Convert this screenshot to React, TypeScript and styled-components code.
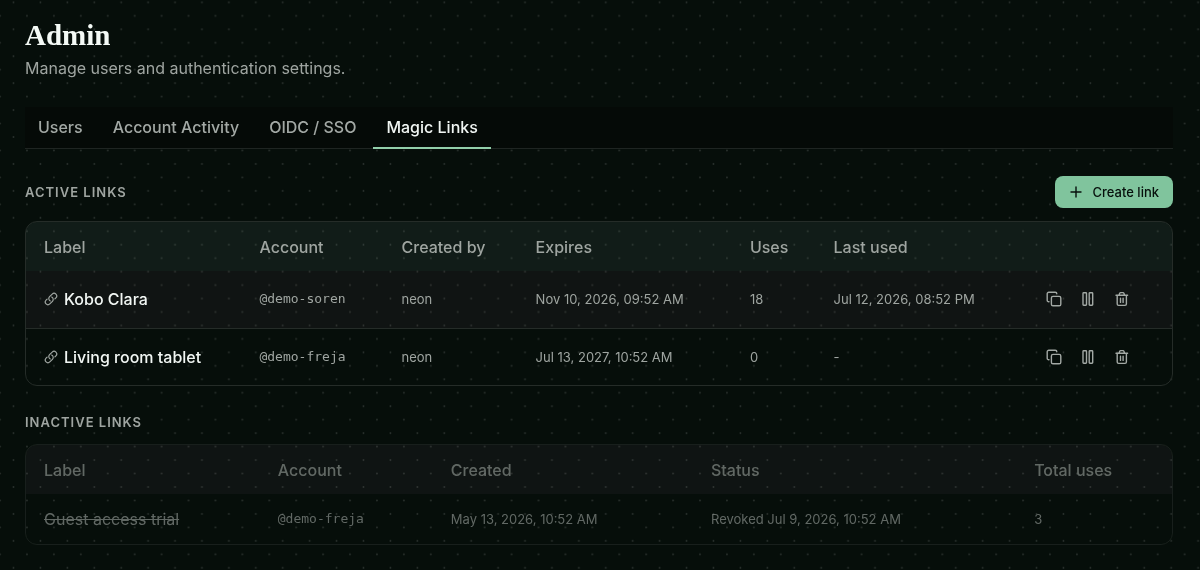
import React from "react";
import styled, { createGlobalStyle, css } from "styled-components";

const sans = `Inter, "Liberation Sans", sans-serif`;
const mono = `"DejaVu Sans Mono", "Liberation Mono", monospace`;

const GlobalStyle = createGlobalStyle`
  *, *::before, *::after { box-sizing: border-box; }
  body {
    margin: 0;
    background: #060e0a;
    color: #9fa5a1;
    font-family: ${sans};
    font-size: 16px;
    line-height: 20px;
  }
`;

const Backdrop = styled.svg`
  position: fixed;
  inset: 0;
  z-index: -1;
  width: 100%;
  height: 100%;
`;

const Page = styled.main`
  padding: 19px 27px 24px 25px;
`;

const Title = styled.h1`
  margin: 0;
  color: #f4faf6;
  font: 700 29px/32px "Liberation Serif", serif;
`;

const Subtitle = styled.p`
  margin: 6px 0 0;
  font-size: 16px;
  line-height: 22px;
`;

const Tabs = styled.nav`
  display: flex;
  gap: 4px;
  margin-top: 28px;
  background: #050a07;
  border-bottom: 1px solid #1f2522;
`;

const Tab = styled.button<{ $active?: boolean }>`
  height: 42px;
  margin-bottom: -1px;
  padding: 0 13px;
  background: none;
  border: 0;
  border-bottom: 2px solid ${(p) => (p.$active ? "#92cfaa" : "transparent")};
  color: ${(p) => (p.$active ? "#f1f6f3" : "#a3a9a5")};
  font: 500 16px/20px ${sans};
  cursor: pointer;
`;

const SectionHead = styled.div`
  display: flex;
  align-items: center;
  justify-content: space-between;
  margin: 27px 0 13px;
`;

const SectionTitle = styled.h2`
  margin: 0;
  font-size: 13px;
  line-height: 18px;
  font-weight: 600;
  letter-spacing: 1px;
  text-transform: uppercase;
`;

const CreateButton = styled.button`
  display: flex;
  align-items: center;
  gap: 10px;
  height: 32px;
  padding: 0 14px;
  background: #80c49d;
  border: 0;
  border-radius: 8px;
  color: #07100c;
  font: 500 13px/20px ${sans};
  cursor: pointer;
`;

const Panel = styled.div<{ $muted?: boolean }>`
  overflow: hidden;
  border: 1px solid #252c28;
  border-radius: 12px;
  opacity: ${(p) => (p.$muted ? 0.6 : 1)};
`;

const Table = styled.table`
  width: 100%;
  border-collapse: collapse;
  table-layout: fixed;
`;

const HeadRow = styled.tr<{ $tinted?: boolean }>`
  height: 49px;
  background: ${(p) => (p.$tinted ? "rgba(130, 180, 170, 0.09)" : "rgba(140, 110, 130, 0.13)")};
`;

const HeadCell = styled.th<{ $width?: string }>`
  width: ${(p) => p.$width ?? "auto"};
  padding: 0 0 0 18px;
  font-size: 16px;
  font-weight: 500;
  text-align: left;
`;

const Row = styled.tr<{ $hovered?: boolean; $short?: boolean }>`
  height: ${(p) => (p.$short ? 50 : 57)}px;
  background: ${(p) => (p.$hovered ? "rgba(140, 100, 130, 0.08)" : "transparent")};
  & + & {
    border-top: 1px solid #252c28;
  }
`;

const cellText = css`
  padding: 0 0 0 18px;
  white-space: nowrap;
`;

const Cell = styled.td<{ $mono?: boolean }>`
  ${cellText}
  font-family: ${(p) => (p.$mono ? mono : sans)};
  font-size: 13px;
`;

const LabelCell = styled.td<{ $revoked?: boolean }>`
  ${cellText}
  color: ${(p) => (p.$revoked ? "inherit" : "#f1f6f3")};
  font-size: 16px;
  font-weight: ${(p) => (p.$revoked ? 400 : 500)};
  text-decoration: ${(p) => (p.$revoked ? "line-through" : "none")};
`;

const LabelGroup = styled.span`
  display: flex;
  align-items: center;
  gap: 6px;
`;

const Actions = styled.div`
  display: flex;
  gap: 4px;
`;

const IconButton = styled.button`
  display: grid;
  place-items: center;
  width: 30px;
  height: 30px;
  padding: 0;
  background: none;
  border: 0;
  color: #a3a9a5;
  cursor: pointer;
`;

const Glyph = styled.svg<{ $size: number }>`
  flex: none;
  width: ${(p) => p.$size}px;
  height: ${(p) => p.$size}px;
  fill: none;
  stroke: currentColor;
  stroke-width: 1.4;
  stroke-linecap: round;
  stroke-linejoin: round;
`;

const LinkGlyph = styled(Glyph)`
  color: #a3a9a5;
  stroke-width: 2;
`;

const activeLinks = [
  { label: "Kobo Clara", account: "@demo-soren", by: "neon", expires: "Nov 10, 2026, 09:52 AM", uses: 18, last: "Jul 12, 2026, 08:52 PM" },
  { label: "Living room tablet", account: "@demo-freja", by: "neon", expires: "Jul 13, 2027, 10:52 AM", uses: 0, last: "-" },
];

const tabs = ["Users", "Account Activity", "OIDC / SSO", "Magic Links"];

function LinkIcon() {
  return (
    <LinkGlyph $size={14} viewBox="0 0 24 24" aria-hidden="true">
      <path d="M13.19 8.688a4.5 4.5 0 0 1 1.242 7.244l-4.5 4.5a4.5 4.5 0 0 1-6.364-6.364l1.757-1.757m13.35-.622 1.757-1.757a4.5 4.5 0 0 0-6.364-6.364l-4.5 4.5a4.5 4.5 0 0 0 1.242 7.244" />
    </LinkGlyph>
  );
}

function CopyIcon() {
  return (
    <Glyph $size={16} viewBox="0 0 16 16" aria-hidden="true">
      <rect x="5.4" y="5.4" width="9.4" height="9.4" rx="1.6" />
      <path d="M3 10.8h-.2A1.6 1.6 0 0 1 1.2 9.2V2.8A1.6 1.6 0 0 1 2.8 1.2h6.4A1.6 1.6 0 0 1 10.8 2.8" />
    </Glyph>
  );
}

function PauseIcon() {
  return (
    <Glyph $size={16} viewBox="0 0 16 16" aria-hidden="true">
      <rect x="3" y="1.8" width="3.5" height="12.4" rx="0.7" />
      <rect x="9.2" y="1.8" width="3.5" height="12.4" rx="0.7" />
    </Glyph>
  );
}

function TrashIcon() {
  return (
    <Glyph $size={16} viewBox="0 0 16 16" aria-hidden="true">
      <path d="M2 4.2h11.6M3.2 4.200v8.800A1.4 1.4 0 0 0 4.6 14.400h6.400A1.4 1.4 0 0 0 12.400 13V4.200M5 4.200l.7-2A1 1 0 0 1 6.600 1.600h2.400a1 1 0 0 1 .9.6l.7 2M6.500 7.200v4.200M9.100 7.200v4.200" />
    </Glyph>
  );
}

export default function App() {
  return (
    <>
      <GlobalStyle />
      <Backdrop aria-hidden="true">
        <defs>
          <pattern id="dots" width="28" height="28" patternUnits="userSpaceOnUse" patternTransform="translate(-0.9 1.4) scale(0.9615)">
            <circle cx="15" cy="1" r="0.95" fill="#2b322e" />
            <circle cx="1" cy="15" r="0.95" fill="#2b322e" />
          </pattern>
        </defs>
        <rect width="100%" height="100%" fill="url(#dots)" />
      </Backdrop>
      <Page>
        <header>
          <Title>Admin</Title>
          <Subtitle>Manage users and authentication settings.</Subtitle>
        </header>
        <Tabs aria-label="Admin sections">
          {tabs.map((name) => (
            <Tab key={name} type="button" $active={name === "Magic Links"}>{name}</Tab>
          ))}
        </Tabs>

        <section>
          <SectionHead>
            <SectionTitle>Active links</SectionTitle>
            <CreateButton type="button">
              <Glyph $size={14} viewBox="0 0 14 14" aria-hidden="true">
                <path d="M7 2v10M2 7h10" />
              </Glyph>
              Create link
            </CreateButton>
          </SectionHead>
          <Panel>
            <Table>
              <thead>
                <HeadRow $tinted>
                  <HeadCell $width="18.8%">Label</HeadCell>
                  <HeadCell $width="12.4%">Account</HeadCell>
                  <HeadCell $width="11.7%">Created by</HeadCell>
                  <HeadCell $width="18.7%">Expires</HeadCell>
                  <HeadCell $width="7.3%">Uses</HeadCell>
                  <HeadCell $width="17.9%">Last used</HeadCell>
                  <HeadCell aria-label="Actions" />
                </HeadRow>
              </thead>
              <tbody>
                {activeLinks.map((link, i) => (
                  <Row key={link.label} $hovered={i === 0}>
                    <LabelCell><LabelGroup><LinkIcon />{link.label}</LabelGroup></LabelCell>
                    <Cell $mono>{link.account}</Cell>
                    <Cell>{link.by}</Cell>
                    <Cell>{link.expires}</Cell>
                    <Cell>{link.uses}</Cell>
                    <Cell>{link.last}</Cell>
                    <Cell>
                      <Actions>
                        <IconButton type="button" aria-label="Copy link"><CopyIcon /></IconButton>
                        <IconButton type="button" aria-label="Pause link"><PauseIcon /></IconButton>
                        <IconButton type="button" aria-label="Delete link"><TrashIcon /></IconButton>
                      </Actions>
                    </Cell>
                  </Row>
                ))}
              </tbody>
            </Table>
          </Panel>
        </section>

        <section>
          <SectionHead>
            <SectionTitle>Inactive links</SectionTitle>
          </SectionHead>
          <Panel $muted>
            <Table>
              <thead>
                <HeadRow>
                  <HeadCell $width="20.4%">Label</HeadCell>
                  <HeadCell $width="15.1%">Account</HeadCell>
                  <HeadCell $width="22.7%">Created</HeadCell>
                  <HeadCell $width="28.2%">Status</HeadCell>
                  <HeadCell>Total uses</HeadCell>
                </HeadRow>
              </thead>
              <tbody>
                <Row $short>
                  <LabelCell $revoked>Guest access trial</LabelCell>
                  <Cell $mono>@demo-freja</Cell>
                  <Cell>May 13, 2026, 10:52 AM</Cell>
                  <Cell>Revoked Jul 9, 2026, 10:52 AM</Cell>
                  <Cell>3</Cell>
                </Row>
              </tbody>
            </Table>
          </Panel>
        </section>
      </Page>
    </>
  );
}
